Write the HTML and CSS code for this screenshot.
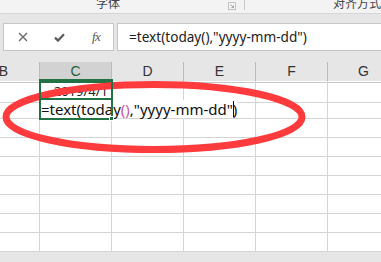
FILE: index.html
```html
<!DOCTYPE html>
<html lang="zh-CN">
<head>
<meta charset="utf-8">
<link rel="stylesheet" href="styles.css">
</head>
<body>
<div class="app">
  <div class="ribbon">
    <div class="group group-font">
      <span class="glabel">字体</span>
      <svg class="launcher" width="8" height="8" viewBox="0 0 8 8"><rect x="0.5" y="0.5" width="7" height="7" fill="none" stroke="#c4c4c4"/><path d="M2.5 2.5 L5.5 5.5 M5.5 3.5 V5.5 H3.5" fill="none" stroke="#a8a8a8"/></svg>
    </div>
    <div class="rsep"></div>
    <div class="group group-align"><span class="glabel">对齐方式</span></div>
  </div>

  <div class="fbar">
    <div class="fbtns">
      <svg class="ic" width="10" height="10" viewBox="0 0 10 10"><path d="M1 1 L9 9 M9 1 L1 9" stroke="#6a6a6a" stroke-width="1.4" fill="none"/></svg>
      <svg class="ic" width="11" height="9" viewBox="0 0 11 9"><path d="M1 4.6 L4 7.6 L10 1.2" stroke="#5a5a5a" stroke-width="2.2" fill="none"/></svg>
      <span class="fx">fx</span>
    </div>
    <div class="finput">=text(today(),"yyyy-mm-dd")</div>
  </div>

  <div class="sheet">
    <div class="row hdr">
      <div class="cell">B</div>
      <div class="cell sel">C</div>
      <div class="cell">D</div>
      <div class="cell">E</div>
      <div class="cell">F</div>
      <div class="cell">G</div>
    </div>
    <div class="row">
      <div class="cell"></div>
      <div class="cell num">2019/4/1</div>
      <div class="cell"></div>
      <div class="cell"></div>
      <div class="cell"></div>
      <div class="cell"></div>
    </div>
    <div class="row">
      <div class="cell"></div>
      <div class="cell active"><span class="edit">=text(today<span class="p1">(</span><span class="p2">)</span>,"yyyy-mm-dd")</span><span class="caret"></span><span class="selbox"></span><span class="handle"></span></div>
      <div class="cell covered"></div>
      <div class="cell"></div>
      <div class="cell"></div>
      <div class="cell"></div>
    </div>
    <div class="row"><div class="cell"></div><div class="cell"></div><div class="cell"></div><div class="cell"></div><div class="cell"></div><div class="cell"></div></div>
    <div class="row"><div class="cell"></div><div class="cell"></div><div class="cell"></div><div class="cell"></div><div class="cell"></div><div class="cell"></div></div>
    <div class="row"><div class="cell"></div><div class="cell"></div><div class="cell"></div><div class="cell"></div><div class="cell"></div><div class="cell"></div></div>
    <div class="row"><div class="cell"></div><div class="cell"></div><div class="cell"></div><div class="cell"></div><div class="cell"></div><div class="cell"></div></div>
    <div class="row"><div class="cell"></div><div class="cell"></div><div class="cell"></div><div class="cell"></div><div class="cell"></div><div class="cell"></div></div>
    <div class="row"><div class="cell"></div><div class="cell"></div><div class="cell"></div><div class="cell"></div><div class="cell"></div><div class="cell"></div></div>
    <div class="row"><div class="cell"></div><div class="cell"></div><div class="cell"></div><div class="cell"></div><div class="cell"></div><div class="cell"></div></div>
  </div>

  <svg class="mark" width="381" height="262" viewBox="0 0 381 262">
    <ellipse cx="154" cy="117" rx="148" ry="32.5" fill="none" stroke="#ff3b3d" stroke-width="7"/>
  </svg>
</div>
</body>
</html>
```

FILE: styles.css
```css
* { box-sizing: border-box; }
html, body { margin: 0; padding: 0; }
body {
  width: 381px;
  height: 262px;
  overflow: hidden;
  background: #e6e6e6;
  font-family: "Noto Sans", "Noto Sans CJK SC", sans-serif;
  color: #222;
}
.app { position: relative; width: 381px; height: 262px; overflow: hidden; }

/* ribbon group labels */
.ribbon {
  display: flex;
  height: 14px;
  background: #f3f3f3;
  border-bottom: 1px solid #d6d6d6;
  overflow: hidden;
}
.group { position: relative; display: flex; }
.group-font { width: 248px; justify-content: center; }
.group-font .glabel { margin-left: -28px; }
.glabel {
  font-family: "Noto Sans CJK SC", sans-serif;
  font-size: 12px;
  line-height: 12px;
  color: #444;
  margin-top: -3px;
  white-space: nowrap;
}
.launcher { position: absolute; right: 8px; top: 2px; }
.rsep { width: 1px; height: 10px; background: #c8c8c8; }
.group-align { padding-left: 88px; }

/* formula bar */
.fbar {
  display: flex;
  gap: 3px;
  padding: 9px 0 0 3px;
  height: 48px;
}
.fbtns {
  width: 111px;
  height: 28px;
  background: #fff;
  border: 1px solid #c6c6c6;
  display: flex;
  align-items: center;
  padding-left: 14px;
}
.fbtns .ic:nth-child(1) { margin-right: 26px; }
.fbtns .ic:nth-child(2) { margin-right: 27px; }
.fx {
  font-family: "Liberation Serif", serif;
  font-style: italic;
  font-size: 13px;
  color: #555;
  letter-spacing: -0.5px;
}
.finput {
  flex: 1;
  height: 28px;
  background: #fff;
  border: 1px solid #c6c6c6;
  border-right: none;
  padding-left: 11px;
  font-size: 13.6px;
  line-height: 26px;
  color: #222;
  white-space: nowrap;
}

/* sheet grid */
.sheet { margin-left: -32px; background: #fff; }
.row { display: grid; grid-template-columns: repeat(6, 72px); height: 19px; }
.cell {
  position: relative;
  border-right: 1px solid #d4d4d4;
  border-bottom: 1px solid #d4d4d4;
  font-size: 14px;
  line-height: 18px;
  white-space: nowrap;
}
.hdr { background: #e6e6e6; }
.hdr .cell {
  text-align: center;
  font-family: "Liberation Sans", sans-serif;
  font-size: 14px;
  line-height: 19px;
  color: #333;
  border-right: 1px solid #bcbcbc;
  border-bottom: 1px solid #c8c8c8;
}
.hdr .cell.sel {
  background: #d2d2d2;
  border-bottom: 2px solid #217346;
  color: #1f5f3a;
}
.num { text-align: right; padding-right: 3px; font-size: 13px; line-height: 21px; }
.covered { border-right-color: transparent; }
.active { overflow: visible; z-index: 2; }
.edit {
  position: absolute;
  left: 1px;
  top: 0;
  font-size: 15px;
  line-height: 18px;
  color: #111;
  background: #fff;
}
.p1 { color: #d64f98; }
.p2 { color: #c060a8; }
.caret {
  position: absolute;
  left: 193px;
  top: 1px;
  width: 1px;
  height: 16px;
  background: #111;
}
.selbox {
  position: absolute;
  left: -1px;
  right: -2px;
  top: -21px;
  bottom: -2px;
  border: 2px solid #217346;
  pointer-events: none;
}
.selbox::after {
  content: "";
  position: absolute;
  left: 0;
  right: 0;
  top: 17px;
  height: 2px;
  background: #217346;
}
.handle {
  position: absolute;
  right: -3px;
  bottom: -3px;
  width: 5px;
  height: 5px;
  background: #217346;
  border: 1px solid #fff;
}

.mark { position: absolute; left: 0; top: 0; pointer-events: none; }
```
